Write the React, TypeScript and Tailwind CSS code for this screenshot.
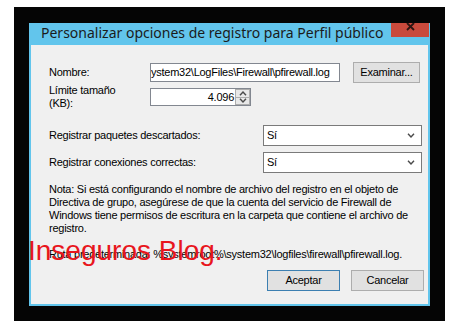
function Chevron({ up = false, className = "" }: { up?: boolean; className?: string }) {
  return (
    <svg width="8" height="5" viewBox="0 0 8 5" className={className}>
      <polyline
        points={up ? "1,4.2 4,1 7,4.2" : "1,0.8 4,4 7,0.8"}
        fill="none"
        stroke="currentColor"
        strokeWidth="1.4"
      />
    </svg>
  );
}

function Select({ value }: { value: string }) {
  return (
    <div className="flex h-[21px] w-[159px] items-center justify-between border border-[#7a7a7a] bg-white pl-[3px] pr-[6px]">
      <span>{value}</span>
      <Chevron className="text-[#4a4a4a]" />
    </div>
  );
}

function Button({ children, primary = false }: { children: string; primary?: boolean }) {
  return (
    <button
      className={`flex h-[21px] w-[73px] items-center justify-center border bg-[#e1e1e1] ${
        primary ? "border-[#3c7fb1]" : "border-[#adadad]"
      }`}
    >
      {children}
    </button>
  );
}

export default function App() {
  return (
    <div className="h-[328px] w-[458px] bg-white pl-[14px] pt-[7px]">
      <div className="h-[314px] w-[431px] bg-[#050505] pl-[15px] pt-[16px]">
        <div className="relative flex h-[283px] w-[401px] flex-col bg-[#62c5ec] font-['Liberation_Sans',Arial,sans-serif] text-[11px] tracking-[-0.25px] text-black">
          {/* title bar */}
          <div className="flex h-[22px] items-start justify-between">
            <span className="pl-[12px] pt-[1px] font-['Noto_Sans',sans-serif] text-[14px] leading-[18px] tracking-normal text-[#1b1b1b]">
              Personalizar opciones de registro para Perfil público
            </span>
            <div className="mr-[1px] flex h-[14px] w-[38px] justify-center bg-[#c84a3c]">
              <svg width="9" height="8" viewBox="0 0 9 8">
                <path d="M1 0 L8 7 M8 0 L1 7" stroke="#2a1512" strokeWidth="1.8" />
              </svg>
            </div>
          </div>

          <div className="mx-[2px] mb-[2px] flex flex-1 flex-col bg-[#f0f0f0] pl-[18px] pr-[4px]">
            <div className="mt-[17px] flex h-[21px] items-center">
              <span className="w-[101px]">Nombre:</span>
              <div className="flex h-[19px] w-[190px] items-center overflow-hidden whitespace-nowrap border border-[#828790] bg-white">
                ystem32\LogFiles\Firewall\pfirewall.log
              </div>
              <button className="ml-[13px] flex h-[21px] w-[67px] items-center justify-center border border-[#adadad] bg-[#e1e1e1]">
                Examinar...
              </button>
            </div>

            <div className="mt-[1px] flex items-start">
              <span className="w-[101px] leading-[13px]">
                Límite tamaño
                <br />
                (KB):
              </span>
              <div className="mt-[4px] flex h-[18px] w-[101px] border border-[#828790] bg-white">
                <span className="flex flex-1 items-center justify-end pr-[1px]">4.096</span>
                <div className="flex w-[15px] flex-col">
                  <div className="flex flex-1 items-center justify-center border border-[#adadad] bg-[#e8e8e8] text-[#4a4a4a]">
                    <Chevron up />
                  </div>
                  <div className="flex flex-1 items-center justify-center border border-t-0 border-[#adadad] bg-[#e8e8e8] text-[#4a4a4a]">
                    <Chevron />
                  </div>
                </div>
              </div>
            </div>

            <div className="mt-[15px] flex items-center">
              <span className="w-[214px]">Registrar paquetes descartados:</span>
              <Select value="Sí" />
            </div>
            <div className="mt-[6px] flex items-center">
              <span className="w-[214px]">Registrar conexiones correctas:</span>
              <Select value="Sí" />
            </div>

            <p className="mt-[10px] whitespace-nowrap leading-[13px]">
              Nota: Si está configurando el nombre de archivo del registro en el objeto de
              <br />
              Directiva de grupo, asegúrese de que la cuenta del servicio de Firewall de
              <br />
              Windows tiene permisos de escritura en la carpeta que contiene el archivo de
              <br />
              registro.
            </p>

            <p className="mt-[13px] whitespace-nowrap leading-[13px]">
              Ruta predeterminada: %systemroot%\system32\logfiles\firewall\pfirewall.log.
            </p>

            <div className="mt-[9px] flex justify-end gap-[11px]">
              <Button primary>Aceptar</Button>
              <Button>Cancelar</Button>
            </div>
          </div>

          <span className="absolute left-[-1px] top-[214px] whitespace-nowrap text-[28px] leading-[28px] tracking-normal text-[#e8161d]">
            Inseguros Blog.
          </span>
        </div>
      </div>
    </div>
  );
}
